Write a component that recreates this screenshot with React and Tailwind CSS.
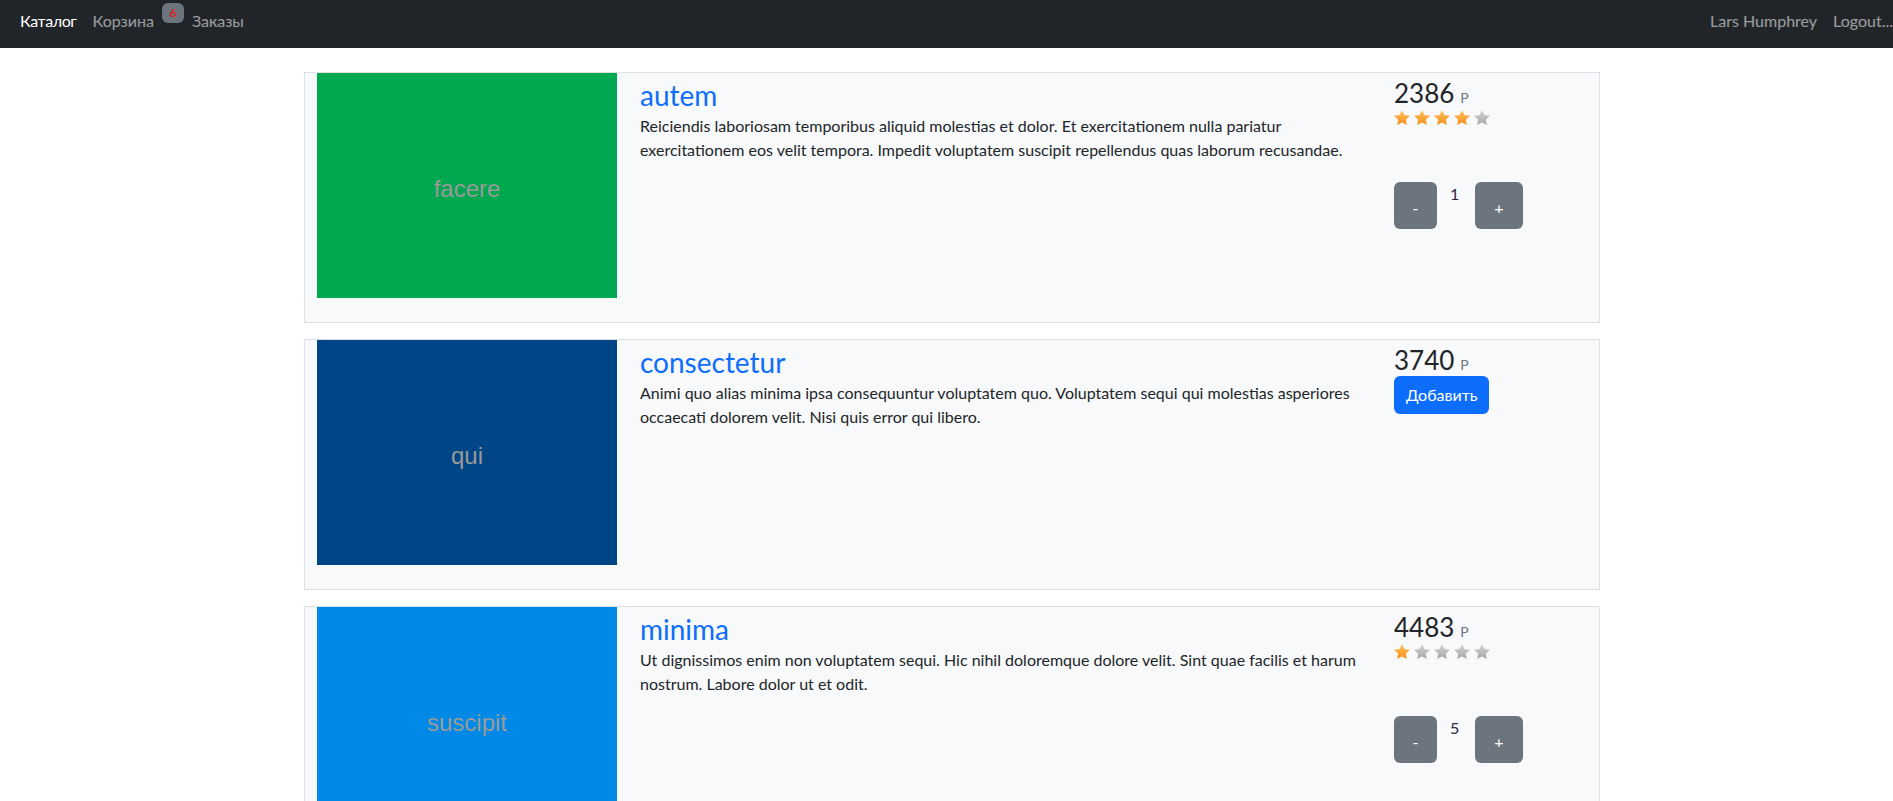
import React from "react";

const products = [
  {
    image: "facere",
    color: "bg-[#00a84f]",
    title: "autem",
    text: "Reiciendis laboriosam temporibus aliquid molestias et dolor. Et exercitationem nulla pariatur exercitationem eos velit tempora. Impedit voluptatem suscipit repellendus quas laborum recusandae.",
    price: 2386,
    rating: 4,
    qty: 1,
  },
  {
    image: "qui",
    color: "bg-[#004586]",
    title: "consectetur",
    text: "Animi quo alias minima ipsa consequuntur voluptatem quo. Voluptatem sequi qui molestias asperiores occaecati dolorem velit. Nisi quis error qui libero.",
    price: 3740,
    rating: 0,
    qty: 0,
  },
  {
    image: "suscipit",
    color: "bg-[#0089e6]",
    title: "minima",
    text: "Ut dignissimos enim non voluptatem sequi. Hic nihil doloremque dolore velit. Sint quae facilis et harum nostrum. Labore dolor ut et odit.",
    price: 4483,
    rating: 1,
    qty: 5,
  },
];

const Star = ({ filled, id }) => (
  <svg width="18" height="18" viewBox="0 0 24 24">
    <defs>
      <linearGradient id={id} x1="0" y1="0" x2="0" y2="1">
        <stop offset="0" stopColor={filled ? "#ffc15a" : "#d2d2d2"} />
        <stop offset="1" stopColor={filled ? "#f7901e" : "#a9a9a9"} />
      </linearGradient>
    </defs>
    <path
      d="M12 1.5l3.2 6.6 7.3 1-5.3 5.1 1.3 7.2L12 18l-6.5 3.4 1.3-7.2L1.5 9.1l7.3-1z"
      fill={`url(#${id})`}
    />
  </svg>
);

const Stars = ({ rating, pid }) => (
  <div className="flex gap-0.5 -ml-[1px] h-[18px]">
    {[1, 2, 3, 4, 5].map((n) => (
      <Star key={n} filled={n <= rating} id={`s-${pid}-${n}`} />
    ))}
  </div>
);

const ProductCard = ({ p, idx }) => (
  <div className="flex gap-[23px] border border-[#dee2e6] bg-[#f8f9fa] pb-6">
    {/* image */}
    <div className="pl-3">
      <div className={`w-[300px] h-[225px] ${p.color} flex items-center justify-center`}>
        <span className="pt-1.5 text-[24px] text-[#9a9a9a] font-['Liberation_Sans',Arial,sans-serif]">
          {p.image}
        </span>
      </div>
    </div>

    {/* description */}
    <div className="w-[731px] pt-[5px]">
      <h3 className="text-[28px] leading-[34px] text-[#0d6efd]">{p.title}</h3>
      <p className="mt-0.5 text-[16px] leading-6 text-[#212529]">{p.text}</p>
    </div>

    {/* price + actions */}
    <div className="w-[192px] pt-[5px]">
      <div className="text-[26px] leading-[31px] text-[#212529]">
        {p.price}
        <span className="ml-1.5 text-[14px] leading-none text-[#6c757d]">Р</span>
      </div>
      {p.qty > 0 ? (
        <>
          <Stars rating={p.rating} pid={idx} />
          <div className="flex items-start mt-[55px]">
            <button className="w-[43px] h-[47px] rounded-md bg-[#6c757d] text-white text-[16px] pt-1">
              -
            </button>
            <span className="ml-[13px] mr-[18px] w-[7px] text-[16px] leading-6 text-[#2d2440]">
              {p.qty}
            </span>
            <button className="w-[48px] h-[47px] rounded-md bg-[#6c757d] text-white text-[16px] pt-1">
              +
            </button>
          </div>
        </>
      ) : (
        <button className="h-[38px] px-3 rounded-md bg-[#0d6efd] text-white text-[16px]">
          Добавить
        </button>
      )}
    </div>
  </div>
);

export default function App() {
  return (
    <div className="min-h-screen bg-white font-['Lato','Roboto',sans-serif] overflow-hidden">
      {/* Navbar */}
      <nav className="h-12 bg-[#212529] flex items-start justify-between pt-[9px] pl-3 overflow-hidden">
        <div className="flex items-start text-[16px] leading-6">
          <a className="px-2 text-white tracking-[-0.4px]">Каталог</a>
          <a className="px-2 text-white/55">Корзина</a>
          <span className="-mt-1.5 flex items-center justify-center h-5 min-w-[22px] px-1.5 rounded-md bg-[#6c757d] text-[#ff0000] text-[12px] leading-none">
            6
          </span>
          <a className="px-2 text-white/55">Заказы</a>
        </div>
        <div className="flex text-[16px] leading-6 -mr-2 whitespace-nowrap">
          <a className="px-2 text-white/55">Lars Humphrey</a>
          <a className="px-2 text-white/55">Logout...</a>
        </div>
      </nav>

      {/* Catalog */}
      <main className="ml-[304px] w-[1296px] mt-6 flex flex-col gap-4">
        {products.map((p, i) => (
          <ProductCard key={p.title} p={p} idx={i} />
        ))}
      </main>
    </div>
  );
}
